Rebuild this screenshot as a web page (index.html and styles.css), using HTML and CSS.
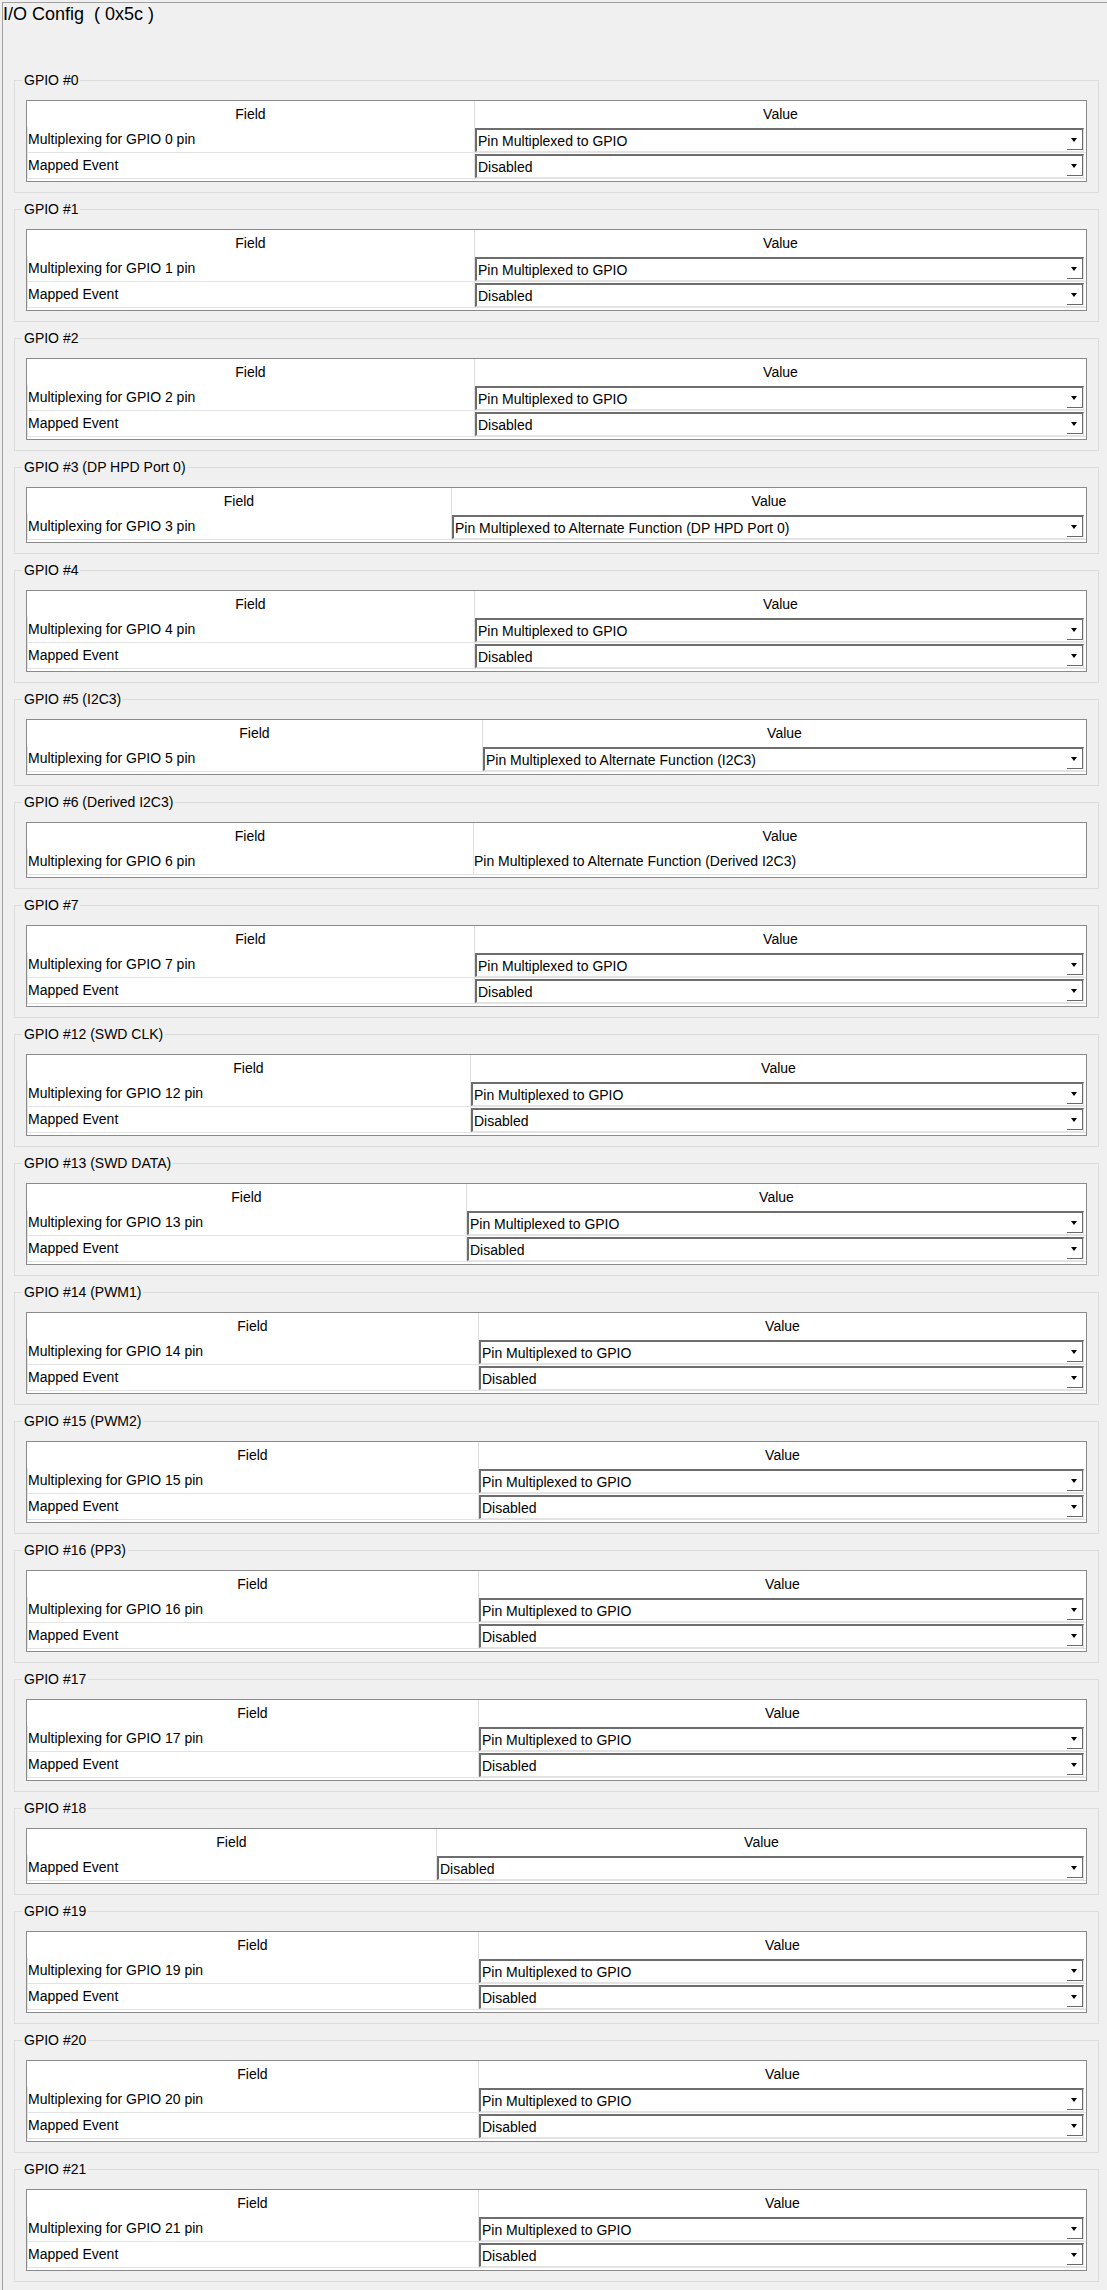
FILE: index.html
```html
<!DOCTYPE html>
<html>
<head>
<meta charset="utf-8">
<title>I/O Config</title>
<link rel="stylesheet" href="styles.css">
</head>
<body>
<div class="panel">
  <h1 class="title">I/O Config&nbsp; ( 0x5c )</h1>

  <fieldset class="grp">
    <legend>GPIO #0</legend>
    <div class="tbl c474">
      <div class="hf">Field</div><div class="hv">Value</div>
      <div class="f">Multiplexing for GPIO 0 pin</div><div class="v"><div class="combo"><span>Pin Multiplexed to GPIO</span><i class="btn"></i></div></div>
      <div class="f">Mapped Event</div><div class="v"><div class="combo"><span>Disabled</span><i class="btn"></i></div></div>
    </div>
  </fieldset>

  <fieldset class="grp">
    <legend>GPIO #1</legend>
    <div class="tbl c474">
      <div class="hf">Field</div><div class="hv">Value</div>
      <div class="f">Multiplexing for GPIO 1 pin</div><div class="v"><div class="combo"><span>Pin Multiplexed to GPIO</span><i class="btn"></i></div></div>
      <div class="f">Mapped Event</div><div class="v"><div class="combo"><span>Disabled</span><i class="btn"></i></div></div>
    </div>
  </fieldset>

  <fieldset class="grp">
    <legend>GPIO #2</legend>
    <div class="tbl c474">
      <div class="hf">Field</div><div class="hv">Value</div>
      <div class="f">Multiplexing for GPIO 2 pin</div><div class="v"><div class="combo"><span>Pin Multiplexed to GPIO</span><i class="btn"></i></div></div>
      <div class="f">Mapped Event</div><div class="v"><div class="combo"><span>Disabled</span><i class="btn"></i></div></div>
    </div>
  </fieldset>

  <fieldset class="grp">
    <legend>GPIO #3 (DP HPD Port 0)</legend>
    <div class="tbl c451">
      <div class="hf">Field</div><div class="hv">Value</div>
      <div class="f">Multiplexing for GPIO 3 pin</div><div class="v"><div class="combo"><span>Pin Multiplexed to Alternate Function (DP HPD Port 0)</span><i class="btn"></i></div></div>
    </div>
  </fieldset>

  <fieldset class="grp">
    <legend>GPIO #4</legend>
    <div class="tbl c474">
      <div class="hf">Field</div><div class="hv">Value</div>
      <div class="f">Multiplexing for GPIO 4 pin</div><div class="v"><div class="combo"><span>Pin Multiplexed to GPIO</span><i class="btn"></i></div></div>
      <div class="f">Mapped Event</div><div class="v"><div class="combo"><span>Disabled</span><i class="btn"></i></div></div>
    </div>
  </fieldset>

  <fieldset class="grp">
    <legend>GPIO #5 (I2C3)</legend>
    <div class="tbl c482">
      <div class="hf">Field</div><div class="hv">Value</div>
      <div class="f">Multiplexing for GPIO 5 pin</div><div class="v"><div class="combo"><span>Pin Multiplexed to Alternate Function (I2C3)</span><i class="btn"></i></div></div>
    </div>
  </fieldset>

  <fieldset class="grp">
    <legend>GPIO #6 (Derived I2C3)</legend>
    <div class="tbl c473">
      <div class="hf">Field</div><div class="hv">Value</div>
      <div class="f">Multiplexing for GPIO 6 pin</div><div class="v plain">Pin Multiplexed to Alternate Function (Derived I2C3)</div>
    </div>
  </fieldset>

  <fieldset class="grp">
    <legend>GPIO #7</legend>
    <div class="tbl c474">
      <div class="hf">Field</div><div class="hv">Value</div>
      <div class="f">Multiplexing for GPIO 7 pin</div><div class="v"><div class="combo"><span>Pin Multiplexed to GPIO</span><i class="btn"></i></div></div>
      <div class="f">Mapped Event</div><div class="v"><div class="combo"><span>Disabled</span><i class="btn"></i></div></div>
    </div>
  </fieldset>

  <fieldset class="grp">
    <legend>GPIO #12 (SWD CLK)</legend>
    <div class="tbl c470">
      <div class="hf">Field</div><div class="hv">Value</div>
      <div class="f">Multiplexing for GPIO 12 pin</div><div class="v"><div class="combo"><span>Pin Multiplexed to GPIO</span><i class="btn"></i></div></div>
      <div class="f">Mapped Event</div><div class="v"><div class="combo"><span>Disabled</span><i class="btn"></i></div></div>
    </div>
  </fieldset>

  <fieldset class="grp">
    <legend>GPIO #13 (SWD DATA)</legend>
    <div class="tbl c466">
      <div class="hf">Field</div><div class="hv">Value</div>
      <div class="f">Multiplexing for GPIO 13 pin</div><div class="v"><div class="combo"><span>Pin Multiplexed to GPIO</span><i class="btn"></i></div></div>
      <div class="f">Mapped Event</div><div class="v"><div class="combo"><span>Disabled</span><i class="btn"></i></div></div>
    </div>
  </fieldset>

  <fieldset class="grp">
    <legend>GPIO #14 (PWM1)</legend>
    <div class="tbl c478">
      <div class="hf">Field</div><div class="hv">Value</div>
      <div class="f">Multiplexing for GPIO 14 pin</div><div class="v"><div class="combo"><span>Pin Multiplexed to GPIO</span><i class="btn"></i></div></div>
      <div class="f">Mapped Event</div><div class="v"><div class="combo"><span>Disabled</span><i class="btn"></i></div></div>
    </div>
  </fieldset>

  <fieldset class="grp">
    <legend>GPIO #15 (PWM2)</legend>
    <div class="tbl c478">
      <div class="hf">Field</div><div class="hv">Value</div>
      <div class="f">Multiplexing for GPIO 15 pin</div><div class="v"><div class="combo"><span>Pin Multiplexed to GPIO</span><i class="btn"></i></div></div>
      <div class="f">Mapped Event</div><div class="v"><div class="combo"><span>Disabled</span><i class="btn"></i></div></div>
    </div>
  </fieldset>

  <fieldset class="grp">
    <legend>GPIO #16 (PP3)</legend>
    <div class="tbl c478">
      <div class="hf">Field</div><div class="hv">Value</div>
      <div class="f">Multiplexing for GPIO 16 pin</div><div class="v"><div class="combo"><span>Pin Multiplexed to GPIO</span><i class="btn"></i></div></div>
      <div class="f">Mapped Event</div><div class="v"><div class="combo"><span>Disabled</span><i class="btn"></i></div></div>
    </div>
  </fieldset>

  <fieldset class="grp">
    <legend>GPIO #17</legend>
    <div class="tbl c478">
      <div class="hf">Field</div><div class="hv">Value</div>
      <div class="f">Multiplexing for GPIO 17 pin</div><div class="v"><div class="combo"><span>Pin Multiplexed to GPIO</span><i class="btn"></i></div></div>
      <div class="f">Mapped Event</div><div class="v"><div class="combo"><span>Disabled</span><i class="btn"></i></div></div>
    </div>
  </fieldset>

  <fieldset class="grp">
    <legend>GPIO #18</legend>
    <div class="tbl c436">
      <div class="hf">Field</div><div class="hv">Value</div>
      <div class="f">Mapped Event</div><div class="v"><div class="combo"><span>Disabled</span><i class="btn"></i></div></div>
    </div>
  </fieldset>

  <fieldset class="grp">
    <legend>GPIO #19</legend>
    <div class="tbl c478">
      <div class="hf">Field</div><div class="hv">Value</div>
      <div class="f">Multiplexing for GPIO 19 pin</div><div class="v"><div class="combo"><span>Pin Multiplexed to GPIO</span><i class="btn"></i></div></div>
      <div class="f">Mapped Event</div><div class="v"><div class="combo"><span>Disabled</span><i class="btn"></i></div></div>
    </div>
  </fieldset>

  <fieldset class="grp">
    <legend>GPIO #20</legend>
    <div class="tbl c478">
      <div class="hf">Field</div><div class="hv">Value</div>
      <div class="f">Multiplexing for GPIO 20 pin</div><div class="v"><div class="combo"><span>Pin Multiplexed to GPIO</span><i class="btn"></i></div></div>
      <div class="f">Mapped Event</div><div class="v"><div class="combo"><span>Disabled</span><i class="btn"></i></div></div>
    </div>
  </fieldset>

  <fieldset class="grp">
    <legend>GPIO #21</legend>
    <div class="tbl c478">
      <div class="hf">Field</div><div class="hv">Value</div>
      <div class="f">Multiplexing for GPIO 21 pin</div><div class="v"><div class="combo"><span>Pin Multiplexed to GPIO</span><i class="btn"></i></div></div>
      <div class="f">Mapped Event</div><div class="v"><div class="combo"><span>Disabled</span><i class="btn"></i></div></div>
    </div>
  </fieldset>
</div>
</body>
</html>
```

FILE: styles.css
```css
* { box-sizing: border-box; }

html, body {
  margin: 0;
  padding: 0;
  background: #f0f0f0;
}

body {
  font-family: "Liberation Sans", Arial, sans-serif;
  font-size: 14px;
  color: #000;
}

.panel {
  margin: 2px 0 0 2px;
  border-left: 1px solid #a0a0a0;
  border-top: 1px solid #a0a0a0;
  padding: 1px 0 0 0;
  min-height: 2288px;
}

.title {
  margin: 0;
  font-size: 18px;
  line-height: 21px;
  font-weight: normal;
}

.grp {
  margin: 0 0 8px 11px;
  width: 1085px;
  min-width: 0;
  border: 1px solid #dcdcdc;
  padding: 12px 11px 10px 11px;
}

.title + .grp { margin-top: 47px; }

.grp legend {
  margin-left: -4px;
  padding: 0 2px;
  font-size: 14px;
  line-height: 16px;
}

/* table-like grid */
.tbl {
  display: grid;
  grid-auto-rows: 26px;
  border: 1px solid #8a8a8a;
  background: #fff;
  padding-bottom: 2px;
}

.c474 { grid-template-columns: 447px 1fr; }
.c451 { grid-template-columns: 424px 1fr; }
.c482 { grid-template-columns: 455px 1fr; }
.c473 { grid-template-columns: 446px 1fr; }
.c470 { grid-template-columns: 443px 1fr; }
.c466 { grid-template-columns: 439px 1fr; }
.c478 { grid-template-columns: 451px 1fr; }
.c436 { grid-template-columns: 409px 1fr; }

.hf, .hv {
  line-height: 26px;
  text-align: center;
  white-space: nowrap;
}

.hv { border-left: 1px solid #dcdcdc; }

.f {
  border-left: 1px solid #e3e3e3;
  border-bottom: 1px solid #e3e3e3;
  line-height: 25px;
  white-space: nowrap;
  overflow: hidden;
}

.v {
  border-left: 1px solid #e3e3e3;
  border-bottom: 1px solid #e3e3e3;
  padding: 1px 2px 0 0;
  min-width: 0;
}

.v.plain {
  padding: 0;
  line-height: 25px;
  white-space: nowrap;
}

.combo {
  display: flex;
  align-items: center;
  height: 24px;
  background: #fff;
  border-top: 2px solid #6d6d6d;
  border-left: 2px solid #6d6d6d;
  border-right: 1px solid #e3e3e3;
  border-bottom: 1px solid #e3e3e3;
  padding-left: 1px;
}

.combo span {
  flex: 1;
  white-space: nowrap;
  overflow: hidden;
}

.combo .btn {
  position: relative;
  align-self: flex-start;
  width: 16px;
  height: 20px;
  border-right: 1px solid #696969;
  border-bottom: 1px solid #696969;
}

.combo .btn::after {
  content: "";
  position: absolute;
  left: 4px;
  top: 8px;
  border-left: 3.5px solid transparent;
  border-right: 3.5px solid transparent;
  border-top: 4px solid #000;
}
```
